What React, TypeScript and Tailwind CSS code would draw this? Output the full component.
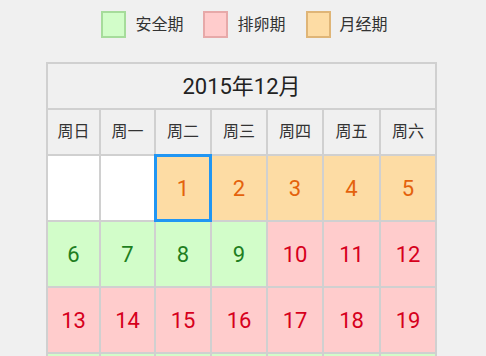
import React from "react";

type Kind = "empty" | "safe" | "ovul" | "period";

const FONT = "font-['Roboto','Noto_Sans_CJK_SC',sans-serif]";

const legend: { label: string; box: string }[] = [
  { label: "安全期", box: "bg-[#d2fdc9] border-[#a6dc9b]" },
  { label: "排卵期", box: "bg-[#ffcccc] border-[#e7a9a9]" },
  { label: "月经期", box: "bg-[#fddca4] border-[#dfb577]" },
];

const weekdays = ["周日", "周一", "周二", "周三", "周四", "周五", "周六"];

const cellBg: Record<Kind, string> = {
  empty: "bg-white",
  safe: "bg-[#d2fdc9] text-[#1f7f1f]",
  ovul: "bg-[#ffcccc] text-[#d6001c]",
  period: "bg-[#fddca4] text-[#e4620c]",
};

// December 2015 starts on a Tuesday
const days: { day?: number; kind: Kind }[] = [
  { kind: "empty" },
  { kind: "empty" },
  ...[1, 2, 3, 4, 5].map((d) => ({ day: d, kind: "period" as Kind })),
  ...[6, 7, 8, 9].map((d) => ({ day: d, kind: "safe" as Kind })),
  ...[10, 11, 12, 13, 14, 15, 16, 17, 18, 19].map((d) => ({ day: d, kind: "ovul" as Kind })),
  ...[20, 21, 22, 23, 24, 25, 26].map((d) => ({ day: d, kind: "safe" as Kind })),
];

export default function App() {
  const selected = 1;

  return (
    <div className={`w-[486px] h-[356px] overflow-hidden bg-[#f0f0f0] ${FONT}`}>
      {/* Legend */}
      <div className="flex justify-center items-center gap-[20px] pt-[11px] pl-[3px]">
        {legend.map((l) => (
          <div key={l.label} className="flex items-center gap-[9px]">
            <div className={`w-[25px] h-[27px] border-2 ${l.box}`} />
            <span className="text-[16px] leading-none text-[#333]">{l.label}</span>
          </div>
        ))}
      </div>

      {/* Calendar */}
      <div className="ml-[46px] mt-[24px] w-[391px] bg-[#d0d0d0] p-[2px] grid grid-cols-[51px_53px_54px_54px_54px_55px_54px] gap-[2px]">
        <div className="col-span-7 h-[44px] bg-[#f0f0f0] flex items-center justify-center text-[22px] text-[#222]">
          2015年12月
        </div>
        {weekdays.map((w) => (
          <div key={w} className="h-[44px] bg-[#f0f0f0] flex items-center justify-center text-[16px] text-[#333]">
            {w}
          </div>
        ))}
        {days.map((c, i) => (
          <div
            key={i}
            className={`relative h-[64px] flex items-center justify-center text-[22px] ${cellBg[c.kind]}`}
          >
            {c.day}
            {c.day === selected && (
              <div className="absolute -inset-[2px] z-10 border-[3px] border-[#2196f3]" />
            )}
          </div>
        ))}
      </div>
    </div>
  );
}
